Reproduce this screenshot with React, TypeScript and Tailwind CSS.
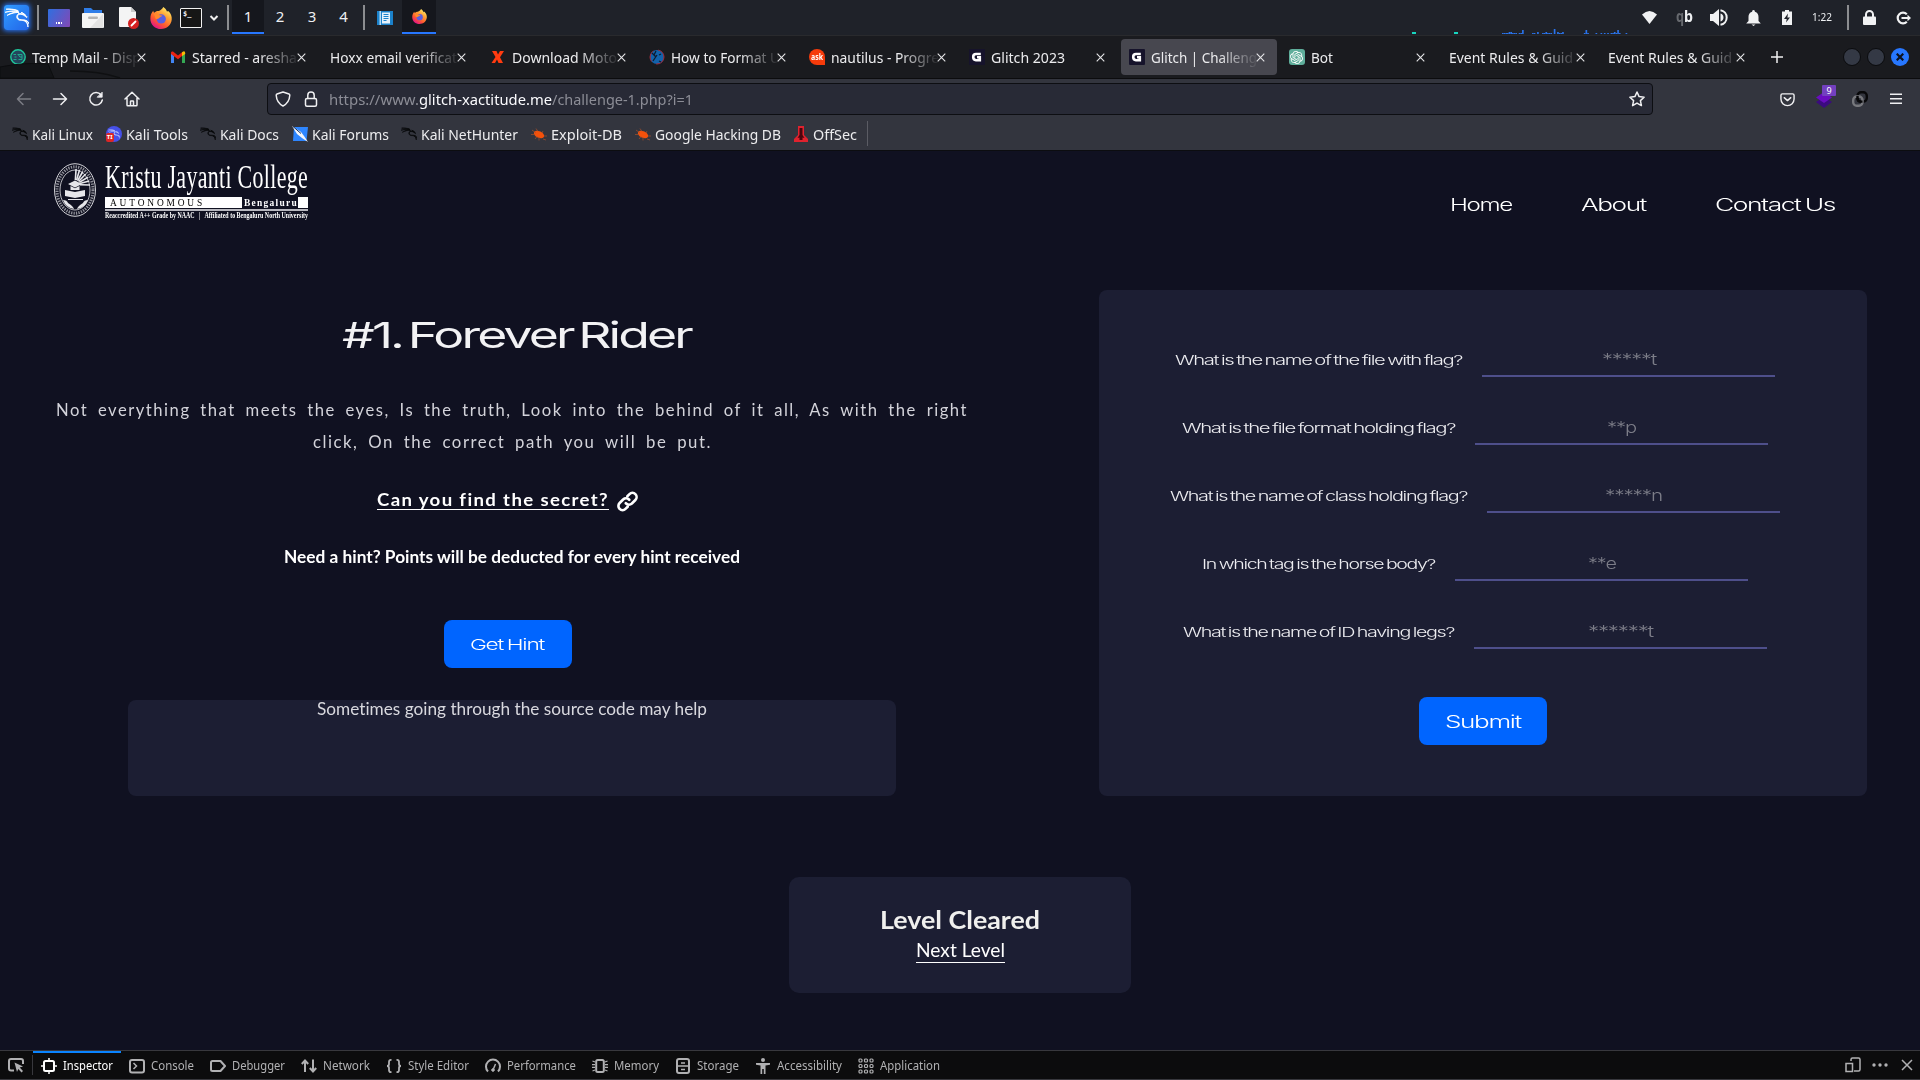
import { useLayoutEffect, useRef, useState, type ReactNode } from "react";
import { SiKalilinux, SiOpenai } from "react-icons/si";

/** Single-line text stretched horizontally so that it spans exactly `w` pixels. */
function Fit({ w, children, className = "", inner = "" }: { w: number; children: ReactNode; className?: string; inner?: string }) {
  const ref = useRef<HTMLSpanElement>(null);
  const [k, setK] = useState(1);
  useLayoutEffect(() => {
    const el = ref.current;
    if (!el) return;
    const natural = el.getBoundingClientRect().width / k;
    if (natural > 0) setK(w / natural);
  }, [w]);
  return (
    <span className={"block shrink-0 text-left " + className} style={{ width: w }}>
      <span ref={ref} className={"inline-block origin-left whitespace-pre " + inner} style={{ transform: `scaleX(${k})` }}>
        {children}
      </span>
    </span>
  );
}

const WIDE = "font-['Inter',sans-serif] font-light tracking-[-0.055em] [word-spacing:-0.06em]";
const BODY = "font-['Lato',sans-serif] [font-variant-ligatures:none]";

function Dragon({ size, weight = 0.9 }: { size: number; weight?: number }) {
  return <SiKalilinux size={size} stroke="currentColor" strokeWidth={weight} />;
}

function Firefox({ size }: { size: number }) {
  return (
    <svg width={size} height={size} viewBox="0 0 24 24">
      <defs>
        <linearGradient id="ffx" x1="0.85" y1="0.05" x2="0.25" y2="0.95">
          <stop offset="0" stopColor="#fff36e" />
          <stop offset="0.35" stopColor="#ffa436" />
          <stop offset="0.7" stopColor="#ff5a2e" />
          <stop offset="1" stopColor="#e31587" />
        </linearGradient>
      </defs>
      <path
        fill="url(#ffx)"
        d="M14.5 0c2 1.200 3.400 3 4 5 .8-.4 1.200-.6 1.800-.4 2.400 2.600 3.700 5.400 3.400 9C23.200 19.500 18.300 24 12 24S.5 19.300.4 13C.3 9.500 1.500 6.500 3.500 4.200c.2 1 .6 1.700 1 2C6.500 4.500 8 4 9.500 4.400c1.800-.8 3.800-2 5-4.400z"
      />
      <circle cx="12.300" cy="13" r="5" fill="#5a5fe0" />
      <path fill="#ff8a2b" d="M4.500 7.500c2.500-1 4.500-.4 6 1.500l3 .4c-.6 1.500-2.500 1.600-3.500 2.600-1 1.200-3 1.500-4 .5z" />
    </svg>
  );
}

function PanelSeparator() {
  return <div className="h-[25px] w-[2px] bg-[#8b8d90]" />;
}

function TopPanel() {
  const bars = [1, 1, 1, 1, 2, 2, 1, 1, 1, 0, 1, 1, 4, 0, 0, 0, 0, 0, 1, 1, 0, 2, 0, 0, 1, 1, 2, 1, 1, 1, 0, 5, 0, 2, 1, 1, 2, 0, 0, 0, 0, 0, 0, 0, 0, 0, 0, 0, 0, 1, 4, 1, 0, 0, 0, 0, 1, 0, 0, 1, 0, 1, 0, 1, 0, 1, 1, 2, 1, 4, 1, 0, 0, 0, 1];
  return (
    <div className="flex h-[35px] w-full items-center bg-[#1f2229] pr-[8px] pl-[4px] font-['Noto_Sans',sans-serif] text-[#eef0f2]">
      <div className="flex h-[25px] w-[25px] items-center justify-center rounded-[3px] bg-[linear-gradient(135deg,#2f9cff,#2364e8)] text-white shadow-[0_0_5px_1px_#2777ff]">
        <Dragon size={24} />
      </div>
      <div className="ml-[8px]"><PanelSeparator /></div>
      <div className="ml-[9px] flex h-[18px] w-[22px] items-end justify-center rounded-[1px] bg-[linear-gradient(120deg,#2f6fe0,#8348b4)] pb-[3px]">
        <div className="flex gap-[1px]">
          <i className="h-[2px] w-[1.500px] bg-white" /><i className="h-[2px] w-[1.500px] bg-white" /><i className="h-[2px] w-[1.500px] bg-white" />
        </div>
      </div>
      <svg className="ml-[12px]" width="22" height="20" viewBox="0 0 22 20">
        <path fill="#2f7de8" d="M2 0h7l2 2h9v5H2z" />
        <rect y="5" width="22" height="15" rx="1" fill="#f4f4f4" />
        <path fill="#dcdcdc" d="M21 6v14H8z" opacity=".7" />
        <rect x="6" y="8.500" width="10" height="2.500" rx="1.200" fill="#b5b5b5" />
      </svg>
      <svg className="ml-[15px]" width="20" height="22" viewBox="0 0 20 22">
        <path fill="#f4f4f4" d="M1 0h11l5 5v15H1q-1 0-1-1V1q0-1 1-1z" />
        <path fill="#c9c9c9" d="M12 0l5 5h-5z" />
        <circle cx="14.500" cy="16.500" r="5.500" fill="#d32020" />
        <path stroke="#fff" strokeWidth="1.800" strokeLinecap="round" d="M12.500 18.500l4-4" />
      </svg>
      <div className="ml-[11px]"><Firefox size={22} /></div>
      <div className="ml-[8px] h-[20px] w-[22px] rounded-[1px] border border-[#f2f2f2] bg-[#161616] pt-[2px] pl-[2px] font-['DejaVu_Sans_Mono',monospace] text-[7px] leading-[7px] font-bold">$_</div>
      <svg className="ml-[7px]" width="10" height="6" viewBox="0 0 10 6"><path d="M1.500 1L5 4.500 8.500 1" fill="none" stroke="#eee" strokeWidth="2" /></svg>
      <div className="ml-[8px]"><PanelSeparator /></div>
      <div className="ml-[3px] flex h-[35px] items-start pb-[1px] text-[15px] leading-[32px]">
        <div className="h-[34px] w-[32px] border-b-2 border-[#2777ff] bg-[#15171d] text-center">1</div>
        <div className="w-[32px] text-center">2</div>
        <div className="w-[32px] text-center">3</div>
        <div className="w-[31px] text-center">4</div>
      </div>
      <div className="ml-[4px]"><PanelSeparator /></div>
      <svg className="ml-[12px]" width="16" height="14" viewBox="0 0 16 14">
        <rect width="16" height="14" fill="#1b82cb" />
        <rect x="2.500" width="1.500" height="14" fill="#b7dcf5" />
        <rect x="5" y="1.500" width="8" height="11" fill="#e6f2fb" />
        <path stroke="#1b82cb" d="M6.500 3.500h5M6.500 5.500h5M6.500 7.500h5M6.500 9.500h3" />
      </svg>
      <div className="ml-[9px] flex h-[35px] items-start">
        <div className="flex h-[34px] w-[34px] items-center justify-center border-b-2 border-[#2777ff] bg-[#15171d]"><Firefox size={15} /></div>
      </div>

      <svg className="mt-auto ml-auto mb-[1px]" width="220" height="8" viewBox="0 0 220 8">
        <path fill="#18d6c0" d="M4 6h4v2h-4zM46 6h4v2h-4z" />
        {bars.map((b, i) => (b ? <rect key={i} x={94 + i * 1.670} y={8 - b} width="1.670" height={b} fill="#2a73ea" /> : null))}
      </svg>
      <svg className="ml-[14px]" width="15" height="13" viewBox="0 0 15 13"><path fill="#f1f2f3" d="M0 3.500Q7.500-3.500 15 3.500L7.500 13z" /></svg>
      <div className="mt-[-3px] ml-[19px] flex text-[16px] leading-[20px] font-bold"><span className="text-[#66696e]"><Fit w={8}>q</Fit></span><Fit w={9}>b</Fit></div>
      <svg className="ml-[17px]" width="18" height="17" viewBox="0 0 18 17">
        <path fill="#f1f2f3" d="M0 5h3l6-5v17L3 12H0z" />
        <path fill="none" stroke="#f1f2f3" strokeWidth="2" d="M10.500 1.200a7.400 7.400 0 010 14.600" />
        <path fill="#f1f2f3" d="M10.500 4.500a4.200 4.200 0 010 8z" />
      </svg>
      <svg className="ml-[18px]" width="15" height="16" viewBox="0 0 15 16"><path fill="#f1f2f3" d="M7.500 0a1.500 1.500 0 011.400 1.700C11.500 2.500 12.500 4.500 12.500 7v4l2.300 2.500H.2L2.500 11V7c0-2.500 1-4.500 3.600-5.300A1.500 1.500 0 017.500 0zM5.500 14.400h4L7.500 16z" /></svg>
      <svg className="ml-[21px]" width="10" height="15" viewBox="0 0 10 15"><path fill="#f1f2f3" d="M3 0h4v1.500h3V15H0V1.500h3z" /><path fill="#1f2229" d="M6 3.500L2 9h2.700L4 12.500 8 7.500H5.400z" /></svg>
      <div className="mt-[-1px] ml-[20px] text-[11.500px] leading-[20px]"><Fit w={20}>1:22</Fit></div>
      <div className="ml-[15px]"><PanelSeparator /></div>
      <svg className="ml-[14px]" width="13" height="15" viewBox="0 0 13 15"><rect y="6.500" width="13" height="8.500" rx="1" fill="#f1f2f3" /><path fill="none" stroke="#f1f2f3" strokeWidth="2" d="M3 7V4.500a3.500 3.500 0 017 0V7" /></svg>
      <svg className="ml-[20px]" width="16" height="14" viewBox="0 0 16 14"><path fill="none" stroke="#f1f2f3" strokeWidth="2.200" d="M10.800 3.300A5.300 5.300 0 1010.800 10.700M5.500 7h7" /><path fill="#f1f2f3" d="M11.500 3.800L15 7l-3.500 3.200z" /></svg>
    </div>
  );
}

const GBadge = (
  <svg width="16" height="16" viewBox="0 0 16 16">
    <rect width="16" height="16" rx="1" fill="#16132b" />
    <path fill="none" stroke="#fff" strokeWidth="2.600" d="M11.800 5H7Q4.200 5 4.200 8T7 11.200h3.800V8.300H8" />
  </svg>
);

type TabData = { icon?: ReactNode; label: string; w: number; active?: boolean; full?: boolean };

const tabs: TabData[] = [
  { icon: <svg width="16" height="16" viewBox="0 0 16 16"><circle cx="8" cy="8" r="7.200" fill="#24455c" stroke="#1fc79c" strokeWidth="1.400" /><path stroke="#1fa98c" fill="none" d="M3.500 5.500h2.500M4.500 8h2M3.500 10.500h3M7.500 5.500h4.500v5H8.500M8.500 6l1.500 2h2" /></svg>, label: "Temp Mail - Disp", w: 109 },
  { icon: <svg width="16" height="16" viewBox="0 0 16 16"><path fill="#4285f4" d="M1 4v10h3V7z" /><path fill="#34a853" d="M15 4v10h-3V7z" /><path fill="#ea2312" d="M1 3.500Q1.500 2 3 2.600L8 6.500l4-3.200V7L8 10.300 1 5z" /><path fill="#fbbc04" d="M12 3.300q3-2.300 3.200.7V5L12 7.300z" /></svg>, label: "Starred - aresha", w: 105 },
  { label: "Hoxx email verificat", w: 127 },
  { icon: <svg width="16" height="16" viewBox="0 0 16 16"><path fill="#ff3b10" d="M2 2h4.500L8 5.500 10 2h4l-4 6.300L13 14H8.500L7 10.500 5 14H1.500l4-6z" /></svg>, label: "Download Moto", w: 105 },
  { icon: <svg width="16" height="16" viewBox="0 0 16 16"><circle cx="8" cy="8" r="7" fill="#1262ac" stroke="#a52b3b" strokeDasharray="12 5" /><path stroke="#0d1b30" strokeWidth="1.300" fill="none" d="M3 4l4 4M8 6l-4 6M5 6l2-4M12 5l-2 1M10 12l2 1" /></svg>, label: "How to Format U", w: 109 },
  { icon: <div className="flex h-[16px] w-[16px] items-center justify-center rounded-full rounded-br-none bg-[#f63b0b] text-[8px] leading-[14px] font-bold text-white"><Fit w={12} className="h-[15px]">ask</Fit></div>, label: "nautilus - Progre", w: 108 },
  { icon: GBadge, label: "Glitch 2023", w: 74, full: true },
  { icon: GBadge, label: "Glitch | Challeng", w: 106, active: true },
  { icon: <div className="flex h-[16px] w-[16px] items-center justify-center rounded-[3px] bg-[#5fae9b] text-white"><SiOpenai size={13} /></div>, label: "Bot", w: 22, full: true },
  { label: "Event Rules & Guid", w: 124 },
  { label: "Event Rules & Guid", w: 124 },
];

function Cross() {
  return <svg width="9" height="9" viewBox="0 0 9 9"><path stroke="#e6e6e8" strokeWidth="1.100" d="M.7.7l7.600 7.600M8.300.7L.7 8.300" /></svg>;
}

function Tab({ icon, label, w, active, full }: TabData) {
  return (
    <div className="flex h-full w-[159.850px] shrink-0 items-center px-[2px]">
      <div className={"flex h-[36px] w-full items-center rounded-[4px] pl-[8px] " + (active ? "bg-[#47474f]" : "")}>
        {icon && <div className="mr-[6px]">{icon}</div>}
        <div className={"-mr-[6px] flex-1 overflow-hidden " + (full ? "" : "[mask-image:linear-gradient(90deg,#000_calc(100%-44px),transparent_calc(100%-3px))]")}><Fit w={w}>{label}</Fit></div>
        <div className="mr-[11.500px]"><Cross /></div>
      </div>
    </div>
  );
}

function TabBar() {
  return (
    <div className="relative flex h-[44px] items-center border-t border-b border-t-[#292a2d] border-b-[#0c0c0e] bg-[#1a1b1f] font-['Noto_Sans',sans-serif] text-[15px] leading-[22px] text-[#ececee]">
      <svg className="absolute bottom-0 left-0" width="130" height="16" viewBox="0 0 130 16">
        <path fill="#131417" stroke="#0d0e10" d="M0 5Q25 0 48 2l6 14H0z" />
        <path fill="none" stroke="#0f1012" strokeWidth="1.500" d="M70 9q30 0 50 7" />
      </svg>
      {tabs.map((t, i) => <Tab key={i} {...t} />)}
      <svg className="ml-[13px]" width="12" height="12" viewBox="0 0 12 12"><path stroke="#f1f1f1" strokeWidth="1.500" d="M6 0v12M0 6h12" /></svg>
      <div className="ml-auto flex gap-[6px] pr-[11px]">
        <div className="h-[18px] w-[18px] rounded-full border border-[#0a0b0d] bg-[#343945]" />
        <div className="h-[18px] w-[18px] rounded-full border border-[#0a0b0d] bg-[#343945]" />
        <div className="flex h-[18px] w-[18px] items-center justify-center rounded-full bg-[#2777ff]"><svg width="8" height="8" viewBox="0 0 8 8"><path stroke="#0d1220" strokeWidth="2.200" d="M.7.7l6.600 6.600M7.300.7L.7 7.300" /></svg></div>
      </div>
    </div>
  );
}

function NavBar() {
  const s = { fill: "none", stroke: "#f0f0f2", strokeWidth: 1.5, strokeLinecap: "round" as const, strokeLinejoin: "round" as const };
  return (
    <div className="flex h-[39px] items-center bg-[#33353e] pt-[1px] pr-[18px] pl-[16px] font-['Noto_Sans',sans-serif]">
      <svg width="16" height="16" viewBox="0 0 16 16" {...s} stroke="#7c7d84"><path d="M14.500 8h-13M7 2.500L1.500 8 7 13.500" /></svg>
      <svg className="ml-[20px]" width="16" height="16" viewBox="0 0 16 16" {...s}><path d="M1.500 8h13M9 2.500L14.500 8 9 13.500" /></svg>
      <svg className="ml-[20px]" width="16" height="16" viewBox="0 0 16 16" {...s}><path d="M13 3.800A6.300 6.300 0 1014.300 9" /><path d="M14.200 1.500v4.700H9.500z" fill="#f0f0f2" strokeWidth=".8" /></svg>
      <svg className="ml-[19.500px]" width="16" height="16" viewBox="0 0 16 16" {...s}><path d="M1 8l7-6.800L15 8M3 6.800V14q0 .8.800.8h8.400q.8 0 .8-.8V6.800M6.500 14.500v-4q0-.6.600-.6h1.800q.6 0 .6.600v4" /></svg>
      <div className="ml-[127.500px] flex h-[32px] w-[1386px] items-center rounded-[4px] border border-[#0d0e12] bg-[#282a36] px-[7px] text-[15px] leading-[22px] text-[#8c8d96]">
        <svg width="16" height="16" viewBox="0 0 16 16" {...s}><path d="M8 1l6 2c.6.2.8.7.8 1.300C14.500 9 12 13 8 15 4 13 1.500 9 1.200 4.300 1.200 3.700 1.400 3.200 2 3z" /></svg>
        <svg className="ml-[12px]" width="16" height="16" viewBox="0 0 16 16" {...s}><rect x="2.500" y="7.500" width="11" height="7.700" rx="1.500" /><path d="M4.800 7.500V4.200a3.200 3.200 0 016.400 0v3.300" /></svg>
        <div className="ml-[10px] flex"><Fit w={90}>https://www.</Fit><Fit w={133} className="text-[#fbfbfe]">glitch-xactitude.me</Fit><Fit w={141}>/challenge-1.php?i=1</Fit></div>
        <svg className="ml-auto" width="16" height="16" viewBox="0 0 16 16" {...s}><path d="M8 1l2.100 4.600 5 .6-3.700 3.400 1 5L8 12.100l-4.400 2.500 1-5L.9 6.200l5-.6z" /></svg>
      </div>
      <svg className="ml-[127px]" width="15" height="15" viewBox="0 0 16 16" {...s}><path d="M2.500 2h11q1.500 0 1.500 1.500V7.500a7 7 0 01-14 0V3.500Q1 2 2.500 2zM4.500 6L8 9.200 11.500 6" /></svg>
      <div className="relative ml-[20px] h-[16px] w-[18px]">
        <svg width="18" height="17" viewBox="0 0 18 17"><path fill="#3b0a80" d="M1 11l8-5 8 5-8 6z" /><path fill="#6a0dc0" d="M1 6.500L9 1l8 5.500L9 12z" /></svg>
        <div className="absolute -top-[6px] left-[7px] flex h-[11px] w-[14px] items-center justify-center rounded-[1px] bg-[#7340bf] text-[9px] leading-[11px] text-white">9</div>
      </div>
      <svg className="ml-[19px]" width="16" height="16" viewBox="0 0 16 16" fill="none" strokeWidth="2.400"><rect x="5.500" y="1.300" width="9.300" height="9.300" rx="3.500" stroke="#08080a" /><rect x="1.200" y="5.500" width="9.300" height="9.300" rx="3.500" stroke="#77787d" /><path stroke="#08080a" d="M5.500 5v2.500q0 3 3 3.100h2" /></svg>
      <svg className="ml-auto" width="12" height="12" viewBox="0 0 12 12" {...s} strokeLinecap="butt"><path d="M0 1.200h12M0 5.700h12M0 10.200h12" /></svg>
    </div>
  );
}

const bug = <svg width="16" height="16" viewBox="0 0 16 16"><ellipse cx="8" cy="8.500" rx="5.500" ry="3.200" transform="rotate(25 8 8.500)" fill="#f4510b" /><path stroke="#a5502c" strokeWidth=".7" fill="none" d="M1 4l4 3M5 2.500l2 3M0 8.500h4M4 13l2-2.500M8 14.500V11M12 5l-1 2M12 13l3 1M13 10h3" /></svg>;
const dragon = <div className="text-[#08090b]"><Dragon size={16} weight={1} /></div>;

const bookmarks: { icon: ReactNode; label: string; w: number }[] = [
  { icon: dragon, label: "Kali Linux", w: 61 },
  { icon: <div className="relative flex h-[16px] w-[16px] items-center justify-center rounded-full bg-[#4650e8] text-[#d8e0ff]"><Dragon size={12} weight={0.5} /><div className="absolute bottom-0 left-0 flex h-[9px] w-[8px] items-center justify-center rounded-[2px] bg-[#dc2626] text-[6px] leading-[9px] font-bold text-white">TI</div></div>, label: "Kali Tools", w: 62 },
  { icon: dragon, label: "Kali Docs", w: 59 },
  { icon: <svg width="16" height="16" viewBox="0 0 16 16"><path fill="#2e86ff" d="M2 1h14l-1.500 14H1z" /><path fill="#f4f6fa" d="M0 0l9 6 3 4 4 6-6-4-5-4z" /><path stroke="#15305f" d="M1 .5l8 7" /></svg>, label: "Kali Forums", w: 77 },
  { icon: dragon, label: "Kali NetHunter", w: 97 },
  { icon: bug, label: "Exploit-DB", w: 71 },
  { icon: bug, label: "Google Hacking DB", w: 126 },
  { icon: <svg width="16" height="16" viewBox="0 0 16 16"><path fill="#e0222e" d="M5 0h6v9l4 4v3H1v-3l4-4z" /><path fill="#48060e" d="M6.500 2h3v7l2 3-2-.5V14h-3v-2.500l-2 .5 2-3z" /></svg>, label: "OffSec", w: 44 },
];

function Bookmarks() {
  return (
    <div className="flex h-[33px] items-center gap-[12.600px] border-b border-[#0c0d10] bg-[#33353e] pb-[1px] pl-[12px] font-['Noto_Sans',sans-serif] text-[14.500px] leading-[20px] text-[#ececee]">
      {bookmarks.map((b) => (
        <div key={b.label} className="flex items-center gap-[4px]">{b.icon}<Fit w={b.w}>{b.label}</Fit></div>
      ))}
      <div className="-ml-[3px] h-[25px] w-px bg-[#5b5c64]" />
    </div>
  );
}

function CollegeLogo() {
  const rays = [0, 1, 2, 3, 4, 5, 6];
  return (
    <div className="flex gap-[8px] font-['Liberation_Serif',serif]">
      <svg className="mt-[12px]" width="43" height="54" viewBox="0 0 43 54" fill="none" stroke="#e6e6ea">
        <ellipse cx="21" cy="27" rx="20.500" ry="26.300" strokeWidth=".9" />
        <ellipse cx="21" cy="27" rx="18" ry="23.200" strokeWidth="3" strokeDasharray="1.300 1.200" opacity=".6" />
        <ellipse cx="21" cy="27" rx="15" ry="20" strokeWidth=".8" />
        {rays.map((r) => {
          const a = -1.5 + r * 0.24;
          return <path key={r} strokeWidth="1.600" d={`M${21 + 5 * Math.cos(a)} ${22 + 5 * Math.sin(a)}L${21 + 15 * Math.cos(a)} ${23 + 17 * Math.sin(a)}`} />;
        })}
        <path fill="#e6e6ea" stroke="none" d="M14 21l7-3.500 7 3.500-7 3.500zM16.500 23v4h9v-4l-4.500 2.300zM11 27l10 2 10-2v6l-10 2-10-2zM9 37q4 0 5 3 5 3 6 6-8-1-11-9zM34 37q-4 0-5 3-5 3-6 6 8-1 11-9z" />
        <path strokeWidth="1" d="M14 36.500h15" />
      </svg>
      <div className="pt-[8px] text-white">
        <Fit w={203} className="h-[38px] text-[34px] leading-[36px]" inner="tracking-[0.5px]">Kristu Jayanti College</Fit>
        <div className="flex h-[11px] w-[203px] items-center border-white text-[11px] leading-[11px]">
          <div className="h-[11px] w-[137px] bg-white pl-[5px] text-[10px] text-black"><Fit w={95} className="tracking-[3px]">AUTONOMOUS</Fit></div>
          <Fit w={54} className="ml-[2px] font-bold tracking-[1.500px]">Bengaluru</Fit>
          <div className="h-[11px] w-[10px] bg-white" />
        </div>
        <div className="mt-[1px] h-[2px] w-[203px] bg-[#b9b9c0]" />
        <Fit w={203} className="text-[7.500px] leading-[10px] font-bold">{"Reaccredited A++ Grade by NAAC   |   Affiliated to Bengaluru North University"}</Fit>
      </div>
    </div>
  );
}

const questions = [
  { q: "What is the name of the file with flag?", w: 287, p: "*****t", pw: 54 },
  { q: "What is the file format holding flag?", w: 273, p: "**p", pw: 29 },
  { q: "What is the name of class holding flag?", w: 297, p: "*****n", pw: 57 },
  { q: "In which tag is the horse body?", w: 233, p: "**e", pw: 28 },
  { q: "What is the name of ID having legs?", w: 271, p: "******t", pw: 65 },
];

function Page() {
  return (
    <main className="h-[899px] w-full overflow-hidden bg-[#101121] text-[#f2f2f4]">
      <header className="flex h-[139px] items-start justify-between pr-[85px] pl-[54px]">
        <CollegeLogo />
        <nav className={"flex gap-[69px] pt-[44px] text-[17px] leading-[20px] text-white " + WIDE}>
          <Fit w={62}>Home</Fit>
          <Fit w={65}>About</Fit>
          <Fit w={120}>Contact Us</Fit>
        </nav>
      </header>
      <div className="flex h-[506px]">
        <section className="flex w-[1024px] flex-col items-center">
          <h1 className={"mt-[25px] ml-[9px] text-[36px] leading-[40px] [word-spacing:-0.12em] " + WIDE}><Fit w={349} inner="font-normal">#1. Forever Rider</Fit></h1>
          <div className={"mt-[39px] flex flex-col items-center text-[16.500px] leading-[32px] tracking-[1.500px] text-[#d3d3da] [word-spacing:4px] " + BODY}>
            <Fit w={912}>Not everything that meets the eyes, Is the truth, Look into the behind of it all, As with the right</Fit>
            <Fit w={399}>click, On the correct path you will be put.</Fit>
          </div>
          <div className={"mt-[30px] mr-[9px] flex items-center gap-[8px] text-[16.500px] leading-[24px] font-bold tracking-[1.200px] text-white " + BODY}>
            <Fit w={232} inner="underline decoration-1 underline-offset-[3px]">Can you find the secret?</Fit>
            <svg className="mt-[2px]" width="21" height="21" viewBox="0 0 24 24" fill="none" stroke="#fff" strokeWidth="3" strokeLinecap="round"><path d="M10 14a5 5 0 007 .3l4-4a4.700 4.700 0 00-6.700-6.700l-2.500 2.400" /><path d="M14 10a5 5 0 00-7-.3l-4 4a4.700 4.700 0 006.700 6.700l2.500-2.400" /></svg>
          </div>
          <div className={"mt-[33px] text-[16.500px] leading-[24px] font-bold text-white " + BODY}><Fit w={456}>Need a hint? Points will be deducted for every hint received</Fit></div>
          <button className={"mt-[51px] mr-[8px] flex h-[48px] w-[128px] shrink-0 items-center justify-center rounded-[8px] bg-[#0065ff] pt-[2px] pr-[2px] text-[15px] leading-[20px] text-white " + WIDE}><Fit w={74}>Get Hint</Fit></button>
          <div className={"mt-[32px] flex h-[96px] w-[768px] shrink-0 justify-center rounded-[8px] bg-[#1c1e33] text-[16.500px] leading-[18px] text-[#d8d8de] " + BODY}><Fit w={390}>Sometimes going through the source code may help</Fit></div>
        </section>
        <form className={"ml-[75px] flex w-[768px] flex-col items-center rounded-[8px] bg-[#1c1e33] pt-[51px] " + WIDE}>
          <div className="flex flex-col items-center gap-[32px]">
            {questions.map((f) => (
              <label key={f.q} className="mr-[16px] flex h-[36px] items-center gap-[20px] text-[13px] leading-[18px] text-[#ededf1]">
                <Fit w={f.w} className="pt-[1px]">{f.q}</Fit>
                <span className="flex h-[36px] w-[293px] items-center justify-center border-b-2 border-[#4e4f8b] pt-[1px] text-[16px] text-[#7c7d88]"><Fit w={f.pw}>{f.p}</Fit></span>
              </label>
            ))}
          </div>
          <button type="button" className="mt-[48px] flex h-[48px] w-[128px] items-center justify-center rounded-[8px] bg-[#0065ff] pt-[2px] pr-[1px] text-[17px] leading-[20px] text-white"><Fit w={76}>Submit</Fit></button>
        </form>
      </div>
      <div className={"mx-auto mt-[81px] flex h-[116px] w-[342px] flex-col items-center rounded-[10px] bg-[#1c1e33] pt-[28px] " + BODY}>
        <h2 className="text-[24px] leading-[30px] font-bold text-[#f0f0ee]"><Fit w={160}>Level Cleared</Fit></h2>
        <a className="mt-[4px] border-b border-white text-[18.500px] leading-[23px] text-white"><Fit w={89}>Next Level</Fit></a>
      </div>
    </main>
  );
}

const T = { width: 16, height: 16, viewBox: "0 0 16 16", fill: "none", stroke: "currentColor", strokeWidth: 2 };

const tools: { label: string; w: number; icon: ReactNode; active?: boolean }[] = [
  { label: "Inspector", w: 50, active: true, icon: <svg {...T}><rect x="3" y="3" width="10" height="10" rx="1.500" /><path strokeWidth="1.500" d="M8 0v3M8 13v3M0 8h3M13 8h3" /></svg> },
  { label: "Console", w: 43, icon: <svg {...T}><rect x="1" y="2" width="14" height="12.500" rx="2" /><path strokeWidth="1.500" d="M4.500 5l3 3-3 3" /></svg> },
  { label: "Debugger", w: 53, icon: <svg {...T}><path strokeLinejoin="round" d="M2.500 3h8L15 8l-4.500 5h-8Q1 13 1 11.500v-7Q1 3 2.500 3z" /></svg> },
  { label: "Network", w: 47, icon: <svg {...T}><path d="M4 14V3M.8 6L4 2.500 7.200 6M12 1.500V13M8.800 10l3.200 3.500 3.200-3.500" /></svg> },
  { label: "Style Editor", w: 61, icon: <svg {...T} strokeWidth={1.8}><path d="M5.500 1.800H5Q3 1.800 3 4v2Q3 8 1 8q2 0 2 2v2q0 2.200 2 2.200h.5M10.500 1.800h.5q2 0 2 2.200v2q0 2 2 2-2 0-2 2v2q0 2.200-2 2.200h-.5" /></svg> },
  { label: "Performance", w: 69, icon: <svg {...T}><path d="M3 13.500a7 7 0 1110 0" /><path strokeWidth="1.500" d="M8 12l2.500-6" /><circle cx="8" cy="12" r="1.300" fill="currentColor" strokeWidth="1" /></svg> },
  { label: "Memory", w: 45, icon: <svg {...T}><rect x="4.200" y="2" width="7.600" height="12" rx="1.500" /><path strokeWidth="1.200" d="M3 4L.5 3M3 6.700H0M3 9.300H0M3 12L.5 13M13 4l2.500-1M13 6.700h3M13 9.300h3M13 12l2.500 1" /></svg> },
  { label: "Storage", w: 42, icon: <svg {...T}><rect x="2" y="1" width="12" height="14" rx="2" /><path strokeWidth="1.500" d="M2 8h12M6 5h4M6 11.500h4" /></svg> },
  { label: "Accessibility", w: 65, icon: <svg {...T} fill="currentColor" stroke="none"><circle cx="8" cy="2" r="2" /><path d="M1 5h14v1.800L10.500 7.500V16H8.800v-5H7.200v5H5.500V7.500L1 6.800z" /></svg> },
  { label: "Application", w: 60, icon: <svg {...T} strokeWidth={1.2}>{[2.5, 8, 13.5].map((y) => [2.500, 8, 13.5].map((x) => <rect key={x + "-" + y} x={x - 1.5} y={y - 1.5} width="3" height="3" rx="1" />))}</svg> },
];

function DevTools() {
  return (
    <div className="flex h-[30px] items-center border-t border-b border-[#38383d] bg-[#0c0c0d] pr-[5px] pl-[8px] font-['Noto_Sans',sans-serif] text-[12.500px] leading-[18px] text-[#b1b1b3]">
      <svg {...T}><path d="M6 13.500H3q-2 0-2-2V4q0-2 2-2h10q2 0 2 2v3" /><path fill="currentColor" stroke="none" d="M6.500 5.500l8.500 4-3.300 1 3.300 3.500-1.500 1.500-3.200-3.500L9 15z" /></svg>
      <div className="ml-[8px] h-[20px] w-px bg-[#38383d]" />
      {tools.map((t) => (
        <div key={t.label} className={"flex h-[28px] items-center gap-[6px] border-t-2 pr-[8px] pb-[1px] pl-[8px] " + (t.active ? "border-[#0a84ff] text-white" : "border-transparent")}>
          {t.icon}<Fit w={t.w} className="pt-[1px]">{t.label}</Fit>
        </div>
      ))}
      <div className="ml-auto flex items-center gap-[11px]">
        <svg {...T} strokeWidth={1.5}><path d="M6 4V2.500Q6 1 7.500 1h6Q15 1 15 2.500v10q0 1.500-1.500 1.500H9M1 6.500h6.500v8H1z" /></svg>
        <svg {...T} fill="currentColor" stroke="none"><circle cx="2" cy="8" r="1.700" /><circle cx="8" cy="8" r="1.700" /><circle cx="14" cy="8" r="1.700" /></svg>
        <svg {...T} strokeWidth={1.500}><path d="M3 3l10 10M13 3L3 13" /></svg>
      </div>
    </div>
  );
}

export default function App() {
  return (
    <div className="flex h-[1080px] w-[1920px] flex-col overflow-hidden">
      <TopPanel />
      <TabBar />
      <NavBar />
      <Bookmarks />
      <Page />
      <DevTools />
    </div>
  );
}
